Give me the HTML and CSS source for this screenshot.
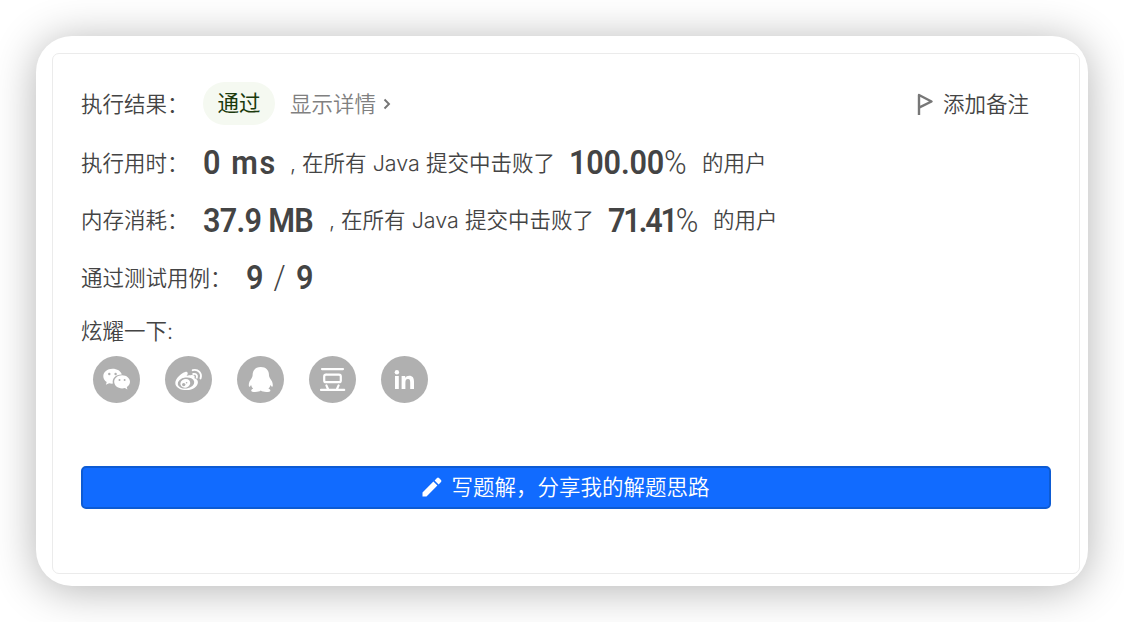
FILE: index.html
```html
<!DOCTYPE html>
<html lang="zh-CN">
<head>
<meta charset="UTF-8">
<meta name="viewport" content="width=device-width, initial-scale=1.0">
<title>执行结果</title>
<link rel="stylesheet" href="styles.css">
</head>
<body>

<div class="window">
    <div class="result">
        <!-- 执行结果 -->
        <div class="row status">
            <span class="label">执行结果：</span>
            <span class="badge">通过</span>
            <a class="detail"><span>显示详情</span>
                <svg width="8" height="12" viewBox="0 0 8 12"><path d="M1.5 1.5 L6 6 L1.5 10.5" fill="none" stroke="#757575" stroke-width="1.9"/></svg>
            </a>
            <a class="note">
                <svg width="16" height="22" viewBox="0 0 16 22"><path d="M2 22 V2 L14.5 8.5 L2 14.7" fill="none" stroke="#777" stroke-width="2.4" stroke-linejoin="round"/></svg>
                <span>添加备注</span>
            </a>
        </div>
        <div class="row">
            <span class="label">执行用时：</span>
            <span class="num time">0 ms</span>
            <span class="text">, 在所有 Java 提交中击败了</span>
            <span class="num rate">100.00<i>%</i></span>
            <span class="text">的用户</span>
        </div>
        <div class="row memory-row">
            <span class="label">内存消耗：</span>
            <span class="num memory">37.9 MB</span>
            <span class="text">, 在所有 Java 提交中击败了</span>
            <span class="num rate2">71.41<i>%</i></span>
            <span class="text">的用户</span>
        </div>
        <div class="row">
            <span class="label long">通过测试用例：</span>
            <span class="num cases">9 <i>/</i> 9</span>
        </div>

        <!-- 分享 -->
        <div class="share-title">炫耀一下:</div>
        <div class="share">
            <a class="icon">
                <svg viewBox="0 0 47 47">
                    <path d="M19.5 12.8c-5.2 0-9.2 3.3-9.2 7.4 0 2.4 1.3 4.5 3.4 5.9l-.8 2.7 3.2-1.6c1.2.3 2.3.5 3.8.4-1.2-5 2.7-9.2 8.9-9.1-.8-3.4-4.7-5.7-9.3-5.7z"/>
                    <path d="M29.1 19.2c-4.5 0-7.9 2.9-7.9 6.6s3.4 6.6 7.9 6.6c1 0 1.9-.1 2.8-.4l2.5 1.4-.6-2.3c2-1.3 3.2-3.1 3.2-5.3 0-3.7-3.5-6.6-7.9-6.6z"/>
                    <g class="hole"><circle cx="16.3" cy="18" r="1.2"/><circle cx="22.6" cy="18" r="1.2"/><circle cx="26.5" cy="23.9" r="1"/><circle cx="31.6" cy="23.9" r="1"/></g>
                </svg>
            </a>
            <a class="icon">
                <svg viewBox="0 0 47 47">
                    <path d="M21.5 20c2-1.9 1.6-4.6-1.2-4.1-3.9.8-10 6.7-10 11 0 4.6 5.4 7.2 11.4 7.2 6.4 0 11.2-3.8 11.2-7.8 0-2.2-1.3-3.3-3.5-4 .9-2.2-.3-3.4-2.8-3.2-1.7.1-3 .5-5.1.9z"/>
                    <ellipse class="hole" cx="21" cy="27" rx="8.3" ry="5.5" transform="rotate(-8 21 27)"/>
                    <ellipse cx="20.3" cy="27.3" rx="5" ry="4.3" transform="rotate(-18 20.3 27.3)"/>
                    <circle class="hole" cx="18.7" cy="28.6" r="1.7"/><circle class="hole" cx="21.6" cy="26.8" r=".8"/>
                    <path class="line thin" d="M27.7 14.2c5.5-1.5 9.6 3.2 7.8 8.2M28.2 18c2.7-.7 4.4 1.2 3.6 3.7"/>
                </svg>
            </a>
            <a class="icon">
                <svg viewBox="0 0 47 47">
                    <path d="M23.8 11c-5.2 0-8.2 3.4-8.2 8 0 1.4-.5 2.3-1 3.3-2 2.8-2.8 4.5-2.8 6.8 0 2 .6 2.4 2.3-.2.5 1.9 1.2 2.9 2.1 3.8-1.4.4-2 1-2 1.7 0 1 1.5 1.5 4.2 1.5 2.4 0 4-.4 5.4-1.4 1.4 1 3 1.4 5.4 1.4 2.7 0 4.2-.5 4.2-1.5 0-.8-.6-1.3-2-1.7.9-.9 1.6-1.9 2.1-3.8 1.7 2.6 2.3 2.2 2.3.2 0-2.3-.8-4-2.8-6.8-.5-1-1-1.9-1-3.3 0-4.6-3-8-8.2-8z"/>
                </svg>
            </a>
            <a class="icon">
                <svg viewBox="0 0 47 47">
                    <path class="line" d="M13 13.1H34M12 33.9H35.2M17.2 18.6H30Q31.8 18.6 31.8 20.4V24.4Q31.8 26.2 30 26.2H17Q15.2 26.2 15.2 24.4V20.4Q15.2 18.6 17 18.6M17.4 29.4L19.2 33.5M29.6 29.4L27.8 33.5"/>
                </svg>
            </a>
            <a class="icon">
                <svg viewBox="0 0 47 47">
                    <circle cx="15.9" cy="16.2" r="2.2"/>
                    <rect x="14" y="20" width="3.8" height="13"/>
                    <path d="M20.6 20h3.6v1.9c.8-1.4 2.1-2.2 4-2.2 3.6 0 4.8 2.2 4.8 5.9V33h-3.8v-6.6c0-2.1-.5-3.3-2.2-3.3-1.8 0-2.6 1.2-2.6 3.3V33h-3.8z"/>
                </svg>
            </a>
        </div>

        <button class="write">
            <svg width="20" height="20" viewBox="0 0 20 20"><path d="M0.5 15.5 L11.4 4.6 L15.4 8.6 L4.5 19.5 H0.5Z M12.6 3.4 L15 1 Q16 .1 17 1 L19 3 Q19.9 4 19 5 L16.6 7.4Z" fill="#fff"/></svg>
            <span>写题解，分享我的解题思路</span>
        </button>
    </div>
</div>

</body>
</html>
```
FILE: styles.css
```css
* {
    box-sizing: border-box;
}
body {
    margin: 0;
    padding: 36px;
    height: 622px;
    overflow: hidden;
    background: #fff;
    color: #444;
    font-family: Inter, "Noto Sans CJK SC", sans-serif;
    font-size: 21.5px;
    font-weight: 350;
}

/* 外层窗口 */
.window {
    width: 1052px;
    height: 550px;
    padding: 17px 8px 12px 16px;
    border-radius: 36px;
    background: #fff;
    box-shadow: 0 4px 44px rgba(0, 0, 0, 0.3);
}
.result {
    height: 521px;
    padding: 28px;
    border: 1px solid #ebebeb;
    border-radius: 7px;
}

/* 每一行结果 */
.row {
    display: flex;
    align-items: center;
    height: 57.5px;
    white-space: nowrap;
}
.label,
.text {
    padding-bottom: 2px;
}
.status {
    height: 43px;
    margin-bottom: 9px;
}
.status .label,
.status a span {
    padding-bottom: 3px;
}
.memory-row .label,
.memory-row .text {
    padding-bottom: 4px;
}
.label {
    flex: none;
    width: 122px;
}
.long {
    width: 165px;
}
.badge {
    width: 72px;
    height: 43px;
    line-height: 43px;
    border-radius: 22px;
    background: #f5f9f1;
    color: #1b3a0c;
    font-weight: 400;
    text-align: center;
}
.detail {
    display: flex;
    align-items: center;
    gap: 7px;
    margin-left: 15px;
    color: #808080;
}
.note {
    display: flex;
    align-items: center;
    gap: 10px;
    margin-left: auto;
    margin-right: 22px;
}

/* 大号数字，横向压窄 */
.num {
    flex: none;
    padding-bottom: 1px;
    font-family: Roboto, sans-serif;
    font-size: 34px;
    font-weight: 600;
    transform: scaleX(0.9);
    transform-origin: left;
}
.num i {
    font-style: normal;
    font-weight: 300;
}
.time {
    width: 87px;
    letter-spacing: 1.8px;
}
.memory {
    width: 126px;
    letter-spacing: -0.8px;
}
.rate {
    width: 133px;
    margin-left: 14px;
    letter-spacing: -0.2px;
}
.rate2 {
    width: 105px;
    margin-left: 14px;
    letter-spacing: -2.4px;
}
.cases {
    letter-spacing: 1.4px;
}

/* 分享图标 */
.share-title {
    height: 49px;
    line-height: 48px;
}
.share {
    display: flex;
    gap: 25px;
    padding-left: 12px;
}
.icon {
    width: 47px;
    height: 47px;
    border-radius: 50%;
    background: #b0b0b0;
}
.icon svg {
    display: block;
    fill: #fff;
}
.icon .hole {
    fill: #b0b0b0;
}
.icon .line {
    fill: none;
    stroke: #fff;
    stroke-width: 2.2;
    stroke-linecap: round;
    stroke-linejoin: round;
}
.icon .thin {
    stroke-width: 1.9;
}

/* 写题解按钮 */
.write {
    display: flex;
    align-items: center;
    justify-content: center;
    gap: 9px;
    width: 970px;
    height: 43px;
    margin-top: 63px;
    padding: 0;
    border: 2px solid #0d5bd3;
    border-radius: 5px;
    background: #116bff;
    color: #fff;
    font: inherit;
}
.write span {
    padding-bottom: 3px;
}
```
